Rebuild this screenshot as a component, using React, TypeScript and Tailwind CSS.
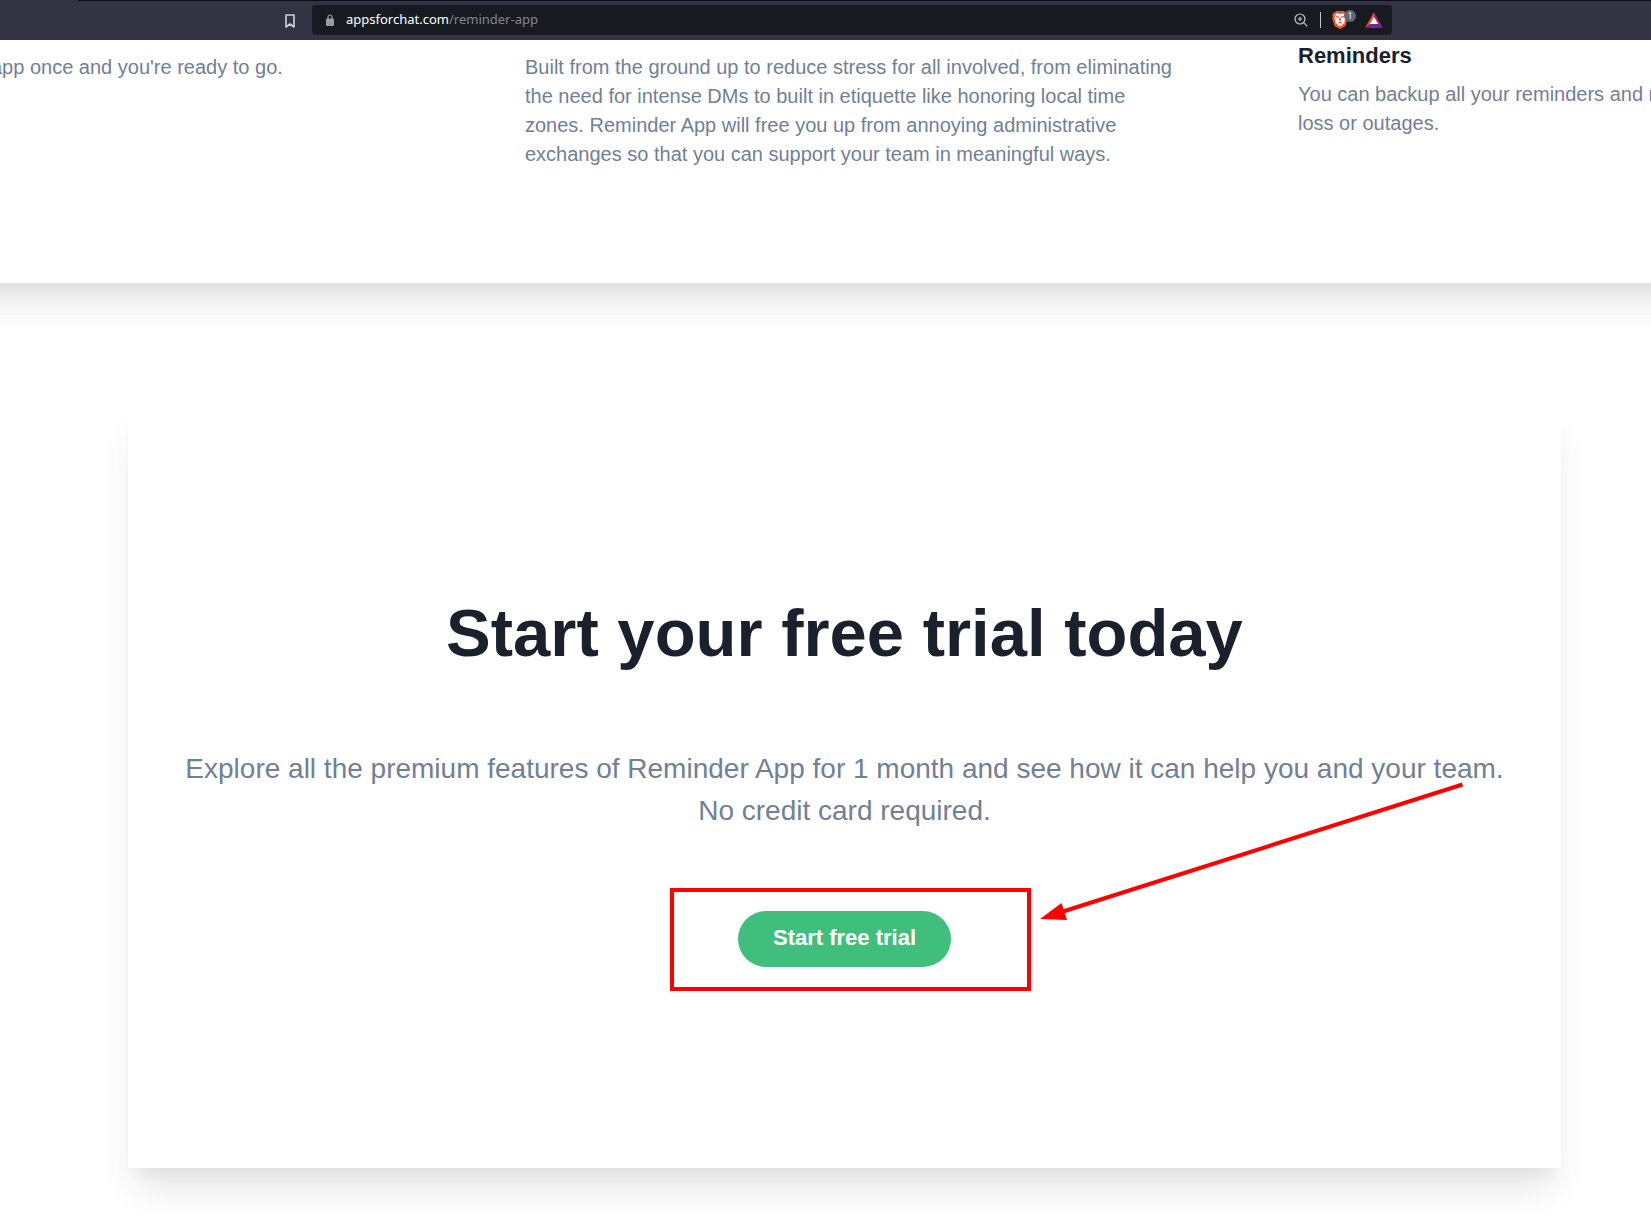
import React from "react";

function BraveLion() {
  return (
    <svg width="16" height="18" viewBox="0 0 16 18" aria-hidden="true">
      <path d="M4.200 0h7.600l1.500 1.600 1.500-.1 1 2.700-.5 1.400.4 1.500-1.800 6.600c-.3.9-.8 1.600-1.600 2.100L8 18l-4.300-2.200c-.8-.5-1.300-1.200-1.600-2.100L.3 7.100l.4-1.500L.2 4.200l1-2.700 1.500.1z" fill="#fb4f1e" />
      <path d="M4.600 2.300L8 2.900l3.400-.6 2 2.400-.4 1.300.3 1.500-1 3 .2 1.500-1.900 1-.3 1.200L8 15.300l-2.300-1.100-.3-1.200-1.900-1 .2-1.500-1-3L3 6l-.4-1.300z" fill="#fff" />
      <path d="M3.900 4.900l3 .6v1.400l-2.700-.7zM12.100 4.900l-3 .6v1.400l2.700-.7zM7.400 6.800h1.200l.5 2.400L8 10l-1.100-.8zM5.800 11.400L8 10.800l2.200.6L8 12.700z" fill="#fb4f1e" />
    </svg>
  );
}

function BatTriangle() {
  return (
    <svg width="18" height="16" viewBox="0 0 18 16" aria-hidden="true">
      <path d="M9 0L0 16l9-6z" fill="#ff4724" />
      <path d="M9 0l9 16-9-6z" fill="#9e1f63" />
      <path d="M0 16h18l-9-6z" fill="#662d91" />
      <path d="M9 4.800L13.200 12H4.800z" fill="#fff" />
    </svg>
  );
}

function BrowserBar() {
  return (
    <header className="flex h-10 items-center bg-[#333343]">
      <div className="h-full w-[78px] shrink-0" />
      <div className="flex h-full min-w-0 flex-1 items-center border-t border-[#0d0a17] pr-[259px]">
        <button aria-label="Bookmark" className="ml-[206px] mr-4 shrink-0">
          <svg width="12" height="14" viewBox="0 0 12 14" fill="none" stroke="#d2d2d4" strokeWidth="1.600" strokeLinejoin="round" aria-hidden="true">
            <path d="M2 1h8v12l-4-3-4 3z" />
          </svg>
        </button>
        <div className="mb-px flex h-[30px] min-w-0 flex-1 items-center rounded bg-[#181a21] px-[9px]">
          <svg className="ml-[5px] shrink-0" width="8" height="12" viewBox="0 0 8 12" aria-hidden="true">
            <path d="M2 5V3a2 2 0 0 1 4 0v2" fill="none" stroke="#9b9ca3" strokeWidth="1.200" />
            <rect y="4.500" width="8" height="7.500" rx="1" fill="#9b9ca3" />
          </svg>
          <a href="#address" className="ml-3 flex-1 pb-0.5 font-['Noto_Sans','Open_Sans',sans-serif] text-[13px] leading-5 text-white">
            appsforchat.com<span className="text-[#85868c]">/reminder-app</span>
          </a>
          <button aria-label="Zoom" className="mr-3">
            <svg width="14" height="14" viewBox="0 0 14 14" fill="none" stroke="#c4c5c9" strokeWidth="1.200" aria-hidden="true">
              <circle cx="6" cy="6" r="5" />
              <path d="M9.600 9.600l3.700 3.700M6 3.700v4.600M3.700 6h4.600" />
            </svg>
          </button>
          <div className="h-4 w-px bg-[#c4c5c9]" />
          <button aria-label="Shields" className="relative ml-[11px] mr-[17px]">
            <BraveLion />
            <span className="absolute -top-px left-3 flex h-3 w-3 items-center justify-center rounded-full bg-[#63647a] font-['Noto_Sans',sans-serif] text-[8px] text-white">1</span>
          </button>
          <button aria-label="Rewards">
            <BatTriangle />
          </button>
        </div>
      </div>
    </header>
  );
}

export default function App() {
  return (
    <div className="min-h-screen overflow-hidden bg-white font-['Liberation_Sans',Arial,sans-serif] text-[#718096]">
      <BrowserBar />
      <main>
        <section className="-mx-12 flex px-12 pb-[114px] text-[20px] leading-[29px] shadow-[0_27px_33px_-7px_rgba(0,0,0,0.1),0_13px_13px_-7px_rgba(0,0,0,0.04)]">
          <p className="-ml-[9px] w-[534px] shrink-0 pt-[13px]">app once and you're ready to go.</p>
          <p className="w-[655px] shrink-0 pt-[13px]">
            Built from the ground up to reduce stress for all involved, from eliminating the need for intense DMs to built in etiquette like honoring local time zones. Reminder App will free you up from annoying administrative exchanges so that you can support your team in meaningful ways.
          </p>
          <div className="ml-[118px] min-w-0 flex-1 whitespace-nowrap">
            <h2 className="mb-[9px] text-[22px] font-bold leading-[31px] text-[#1a202c]">Reminders</h2>
            <p>You can backup all your reminders and re<br />loss or outages.</p>
          </div>
        </section>

        <section className="mb-[60px] ml-32 mr-[90px] mt-[122px] flex flex-col items-center px-10 pb-[201px] pt-[180px] text-center shadow-[0_27px_33px_-7px_rgba(0,0,0,0.1),0_13px_13px_-7px_rgba(0,0,0,0.04)]">
          <h1 className="text-[67px] font-bold leading-[96px] text-[#1a202c]">Start your free trial today</h1>
          <p className="mt-[67px] text-[28px] leading-[42px]">
            Explore all the premium features of Reminder App for 1 month and see how it can help you and your team.
            <br />
            No credit card required.
          </p>
          <div className="relative mt-[79px]">
            <button className="h-14 rounded-full bg-[#40bf7c] px-[35px] pb-1 text-[22px] font-bold text-white">Start free trial</button>
            <div className="pointer-events-none absolute -bottom-6 -left-[68px] -right-20 -top-[23px] border-4 border-[#ff0000]" />
            <svg className="pointer-events-none absolute -top-[131px] left-[302px]" width="428" height="142" viewBox="0 0 428 142" aria-hidden="true">
              <path d="M23 131.500L422.500 4.500" stroke="#ff0000" strokeWidth="4" />
              <path d="M0 139L21.500 123L27 140z" fill="#ff0000" />
            </svg>
          </div>
        </section>
      </main>
    </div>
  );
}
